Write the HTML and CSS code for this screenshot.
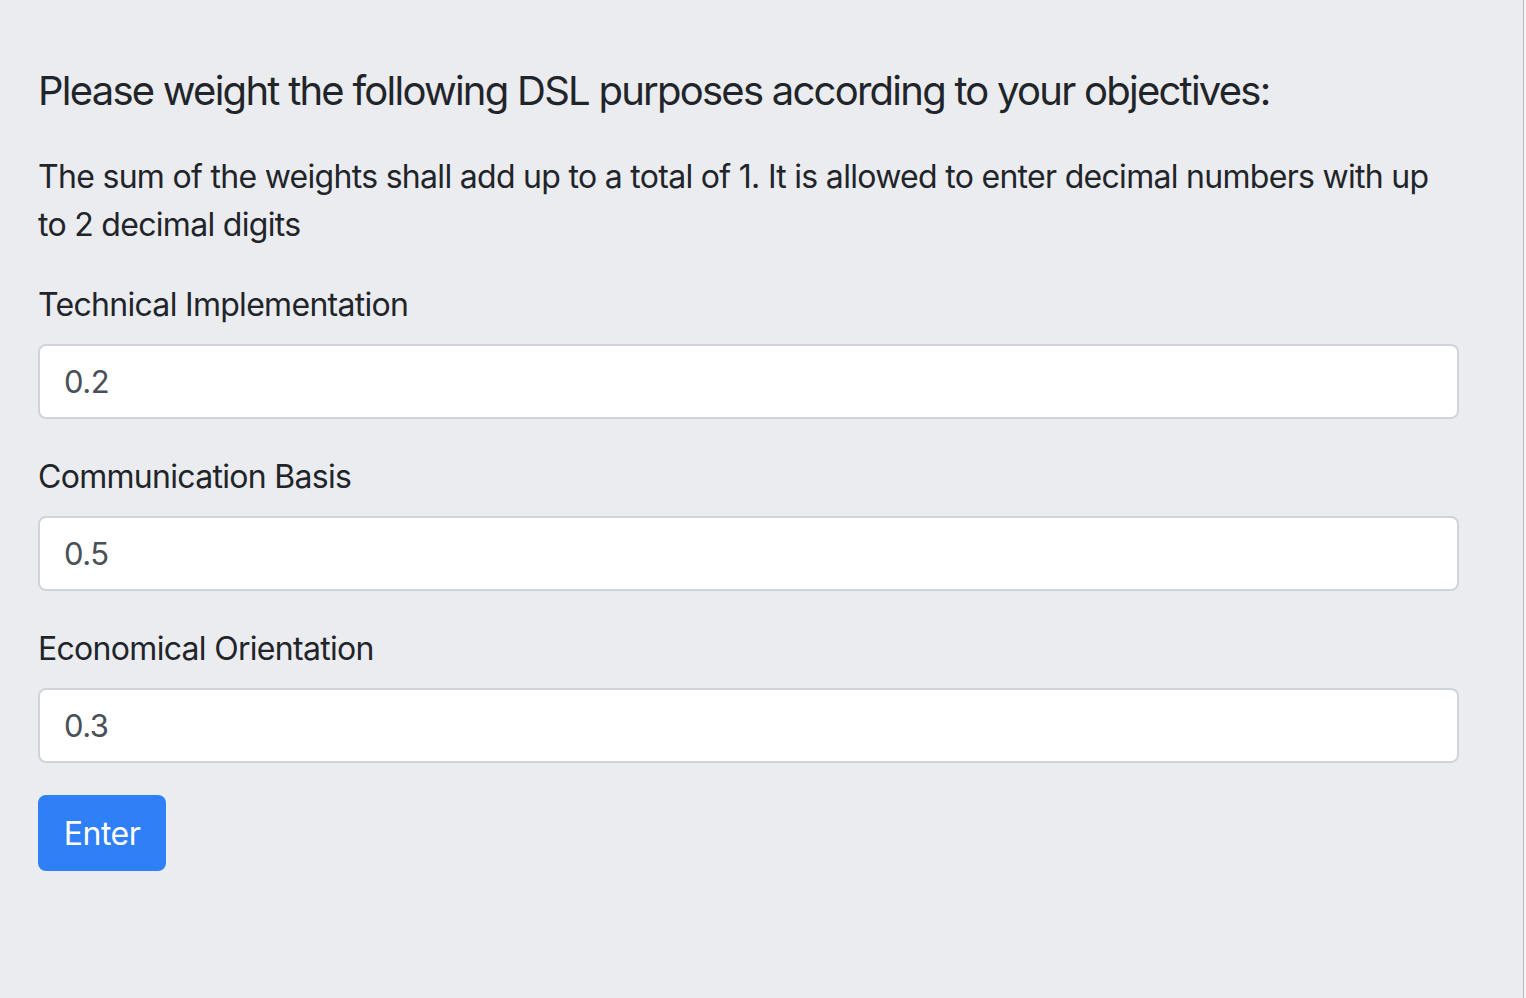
FILE: index.html
```html
<!DOCTYPE html>
<html lang="en">
<head>
<meta charset="utf-8">
<title>DSL purposes</title>
<link rel="stylesheet" href="styles.css">
</head>
<body>
<div class="page">
  <main class="content">
    <h5 class="title">Please weight the following DSL purposes according to your objectives:</h5>
    <p class="intro">The sum of the weights shall add up to a total of 1. It is allowed to enter decimal numbers with up to 2 decimal digits</p>
    <form class="form">
      <div class="group">
        <label class="label" for="f1">Technical Implementation</label>
        <input class="input" id="f1" type="text" value="0.2">
      </div>
      <div class="group">
        <label class="label" for="f2">Communication Basis</label>
        <input class="input" id="f2" type="text" value="0.5">
      </div>
      <div class="group">
        <label class="label" for="f3">Economical Orientation</label>
        <input class="input" id="f3" type="text" value="0.3">
      </div>
      <button class="btn" type="button">Enter</button>
    </form>
  </main>
  <div class="edge"></div>
</div>
</body>
</html>
```

FILE: styles.css
```css
html, body {
  margin: 0;
  padding: 0;
  height: 100%;
}
body {
  background: #ebecf0;
  font-family: Inter, "Noto Sans", "Liberation Sans", sans-serif;
  color: #212529;
}
.page {
  display: flex;
  height: 998px;
  overflow: hidden;
}
.content {
  flex: 1;
  padding: 67px 64px 0 38px;
}
.edge {
  width: 2px;
  border-left: 1px solid #b9b9bc;
  background: #f4f4f4;
}
.title {
  margin: 0 0 38px;
  font-size: 40px;
  font-weight: 400;
  line-height: 48px;
  letter-spacing: -1.75px;
  color: #212529;
}
.intro {
  margin: 0 0 32px;
  font-size: 32px;
  line-height: 48px;
  letter-spacing: -0.7px;
}
.form {
  display: flex;
  flex-direction: column;
}
.group {
  display: flex;
  flex-direction: column;
  margin-bottom: 34px;
}
.label {
  font-size: 32px;
  line-height: 48px;
  letter-spacing: -0.7px;
  margin-bottom: 15px;
}
.input {
  box-sizing: border-box;
  height: 75px;
  padding: 12px 24px;
  border: 2px solid #d0d4da;
  border-radius: 8px;
  background: #fff;
  font-family: inherit;
  font-size: 31px;
  letter-spacing: -0.5px;
  color: #495057;
  outline: none;
}
.btn {
  align-self: flex-start;
  box-sizing: border-box;
  height: 76px;
  width: 128px;
  margin-top: -2px;
  border: none;
  border-radius: 8px;
  background: #2f80f6;
  color: #fff;
  font-family: inherit;
  font-size: 32px;
  letter-spacing: -0.5px;
  padding: 0;
}
```
